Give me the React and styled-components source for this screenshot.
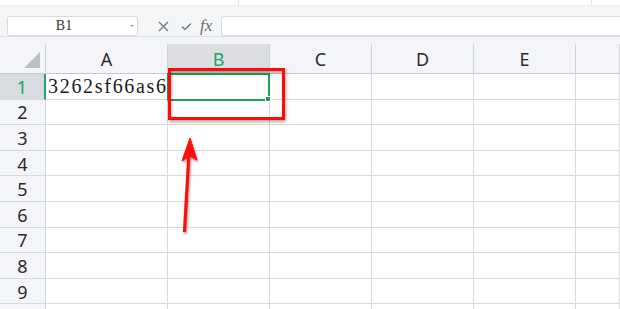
import React from "react";
import styled, { createGlobalStyle } from "styled-components";

const GlobalStyle = createGlobalStyle`
  html, body {
    margin: 0;
    padding: 0;
    background: #ffffff;
    overflow: hidden;
  }
  body {
    font-family: "Noto Sans", "Liberation Sans", sans-serif;
  }
`;

const Page = styled.div`
  width: 620px;
  height: 309px;
  overflow: hidden;
  display: flex;
  flex-direction: column;
`;

const TopStrip = styled.div`
  height: 5px;
  flex-shrink: 0;
  display: flex;
  background: #ffffff;
`;

const TabEdge = styled.div`
  width: ${(p) => p.w}px;
  border-right: 1px solid #e3e5ea;
`;

const FormulaBar = styled.div`
  height: 32px;
  flex-shrink: 0;
  box-sizing: border-box;
  background: #f4f5f7;
  border-top: 1px solid #eceef1;
  border-bottom: 1px solid #dcdfe5;
  display: flex;
  align-items: flex-start;
  padding: 10px 0 0 7px;
`;

const NameBox = styled.div`
  width: 131px;
  height: 20px;
  box-sizing: border-box;
  background: #fff;
  border: 1px solid #d8dbe1;
  border-radius: 3px;
  display: flex;
  align-items: center;
  font-family: "Liberation Serif", serif;
  font-size: 14px;
  color: #333;
`;

const NameText = styled.span`
  flex: 1;
  text-align: center;
  padding-right: 10px;
`;

const DropArrow = styled.span`
  width: 0;
  height: 0;
  border-left: 2px solid transparent;
  border-right: 2px solid transparent;
  border-top: 2px solid #9a9ea6;
  margin-right: 3px;
`;

const IconGroup = styled.div`
  display: flex;
  align-items: center;
  height: 20px;
  gap: 12px;
  margin-left: 20px;
`;

const FxLabel = styled.span`
  font-family: "Liberation Serif", serif;
  font-style: italic;
  font-size: 17px;
  color: #6a6e75;
  margin-left: -4px;
`;

const FormulaInput = styled.div`
  flex: 1;
  height: 20px;
  box-sizing: border-box;
  margin-left: 9px;
  background: #fff;
  border: 1px solid #d8dbe1;
  border-right: none;
  border-radius: 3px 0 0 3px;
`;

const Sheet = styled.div`
  position: relative;
  flex: 1;
  min-height: 0;
  background: #fff;
`;

const HeaderGap = styled.div`
  height: 7px;
  background: #f4f5f8;
`;

const Grid = styled.div`
  display: grid;
  grid-template-columns: 46px 122px 102px 102px 102px 102px 1fr;
  grid-template-rows: 30px;
  grid-auto-rows: 25.6px;
`;

const ColHeader = styled.div`
  box-sizing: border-box;
  display: flex;
  align-items: center;
  justify-content: center;
  background: ${(p) => (p.active ? "#dcdee3" : "#f4f5f8")};
  color: ${(p) => (p.active ? "#24a468" : "#2b2b2b")};
  border-right: 1px solid #cfd2da;
  border-bottom: 1px solid #c6cad3;
  font-size: 18px;
`;

const Corner = styled(ColHeader)`
  justify-content: flex-end;
  align-items: flex-end;
  padding: 0 5px 5px 0;
`;

const Triangle = styled.div`
  width: 0;
  height: 0;
  border-left: 16px solid transparent;
  border-bottom: 16px solid #bcbfc5;
`;

const RowHeader = styled.div`
  box-sizing: border-box;
  display: flex;
  align-items: center;
  justify-content: center;
  background: ${(p) => (p.active ? "#d8dbe0" : "#f4f5f8")};
  color: ${(p) => (p.active ? "#24a468" : "#2b2b2b")};
  border-right: ${(p) => (p.active ? "2px solid #21a366" : "1px solid #cfd2da")};
  border-bottom: 1px solid #d6d9e0;
  font-size: 18px;
  padding-top: 1px;
`;

const Cell = styled.div`
  box-sizing: border-box;
  border-right: 1px solid #d6d9e0;
  border-bottom: 1px solid #d6d9e0;
  font-family: "Liberation Serif", serif;
  font-size: 20px;
  letter-spacing: 1.7px;
  color: #1b1b1b;
  white-space: nowrap;
  display: flex;
  align-items: center;
  padding-left: 2px;
`;

/* overlays, positioned relative to the sheet (sheet top = page y 37) */
const Selection = styled.div`
  position: absolute;
  left: 167px;
  top: 36px;
  width: 103px;
  height: 28px;
  box-sizing: border-box;
  border: 2px solid #1f9f5c;
`;

const FillHandle = styled.div`
  position: absolute;
  right: -3px;
  bottom: -3px;
  width: 4px;
  height: 4px;
  background: #1f9f5c;
  border: 1px solid #fff;
`;

const Highlight = styled.div`
  position: absolute;
  left: 168px;
  top: 31px;
  width: 117px;
  height: 52px;
  box-sizing: border-box;
  border: 3.5px solid #ff0a0a;
  box-shadow: 1px 2px 3px rgba(0, 0, 0, 0.35), inset 1px 2px 3px rgba(0, 0, 0, 0.3);
`;

const ArrowSvg = styled.svg`
  position: absolute;
  left: 0;
  top: 0;
  overflow: visible;
  pointer-events: none;
`;

const columns = ["A", "B", "C", "D", "E", ""];
const rows = [1, 2, 3, 4, 5, 6, 7, 8, 9, 10];

export default function App() {
  return (
    <Page>
      <GlobalStyle />
      <TopStrip>
        <TabEdge w={238} />
        <TabEdge w={352} />
      </TopStrip>
      <FormulaBar>
        <NameBox>
          <NameText>B1</NameText>
          <DropArrow />
        </NameBox>
        <IconGroup>
          <svg width="11" height="11" viewBox="0 0 11 11">
            <path d="M1 1 L10 10 M10 1 L1 10" stroke="#74787f" strokeWidth="1.2" fill="none" />
          </svg>
          <svg width="11" height="9" viewBox="0 0 11 9">
            <path d="M1 4.5 L4 7.5 L10 1.5" stroke="#74787f" strokeWidth="1.3" fill="none" />
          </svg>
          <FxLabel>fx</FxLabel>
        </IconGroup>
        <FormulaInput />
      </FormulaBar>
      <Sheet>
        <HeaderGap />
        <Grid>
          <Corner>
            <Triangle />
          </Corner>
          {columns.map((c) => (
            <ColHeader key={c || "f"} active={c === "B"}>
              {c}
            </ColHeader>
          ))}
          {rows.map((r) => (
            <React.Fragment key={r}>
              <RowHeader active={r === 1}>{r < 10 ? r : ""}</RowHeader>
              {columns.map((c) => (
                <Cell key={c || "f"}>{r === 1 && c === "A" ? "3262sf66as6" : ""}</Cell>
              ))}
            </React.Fragment>
          ))}
        </Grid>
        <Selection>
          <FillHandle />
        </Selection>
        <Highlight />
        <ArrowSvg width="620" height="272">
          <defs>
            <filter id="sh" x="-50%" y="-50%" width="200%" height="200%">
              <feDropShadow dx="1" dy="2" stdDeviation="1.2" floodColor="#000" floodOpacity="0.35" />
            </filter>
          </defs>
          <g filter="url(#sh)" fill="#ff0a0a" stroke="#ff0a0a">
            <line x1="184.5" y1="195" x2="189" y2="116" strokeWidth="3.2" />
            <polygon points="190,101 182,124 189.5,119 197,123" strokeWidth="1" />
          </g>
        </ArrowSvg>
      </Sheet>
    </Page>
  );
}
